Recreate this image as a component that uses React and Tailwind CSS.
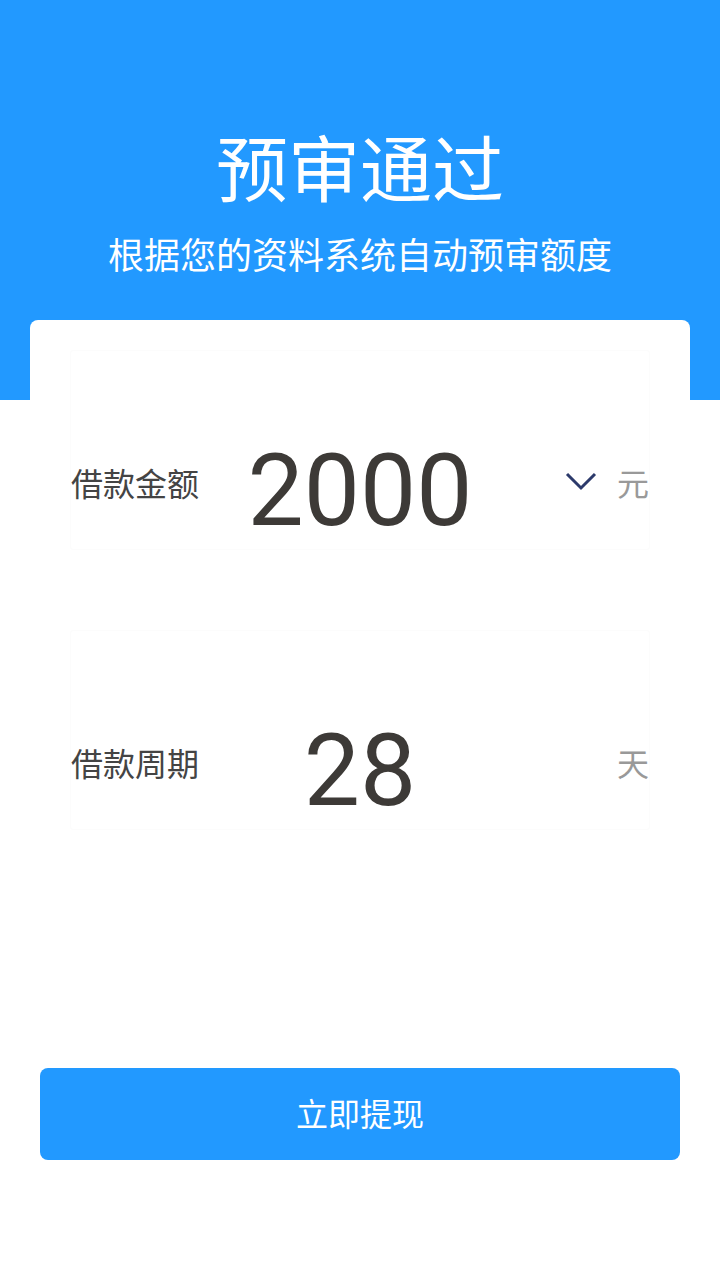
import React from 'react';

const font = { fontFamily: '"Noto Sans CJK SC", "Noto Sans", sans-serif' };

const Row = ({ label, value, unit, dropdown }) => (
  <div className="h-[200px] rounded-[3px] border border-[#fcfcfc] pt-[85px]">
    <div className="grid h-[100px] grid-cols-[1fr_auto_1fr] items-center">
      <div className="-translate-y-[4px] text-[32px] leading-none text-[#444444]">{label}</div>
      <div className="translate-y-[5px] font-['Roboto'] text-[100px] leading-none text-[#3d3a37]">{value}</div>
      <div className="flex -translate-y-[4px] items-center justify-end">
        {dropdown && (
          <svg width="32" height="20" viewBox="0 0 32 20" className="mb-[2px] mr-[20px]">
            <path d="M2 3 L16 17 L30 3" fill="none" stroke="#2c3a6b" strokeWidth="3" />
          </svg>
        )}
        <span className="text-[32px] leading-none text-[#999999]">{unit}</span>
      </div>
    </div>
  </div>
);

const App = () => {
  return (
    <div className="min-h-[1280px] bg-white" style={font}>
      <div className="flex h-[400px] flex-col items-center bg-[#2299ff] pt-[123px] text-white">
        <h1 className="text-[72px] leading-[84px]">预审通过</h1>
        <p className="mt-[22px] text-[36px] leading-[48px]">根据您的资料系统自动预审额度</p>
      </div>
      <div className="mx-[30px] -mt-[80px] rounded-t-lg bg-white px-[40px] pt-[30px]">
        <Row label="借款金额" value="2000" unit="元" dropdown />
        <div className="mt-[80px]">
          <Row label="借款周期" value="28" unit="天" />
        </div>
      </div>
      <div className="mx-[40px] mt-[238px]">
        <button className="flex h-[92px] w-full items-center justify-center rounded-lg bg-[#2299ff] pb-[4px] text-[32px] text-white">
          立即提现
        </button>
      </div>
    </div>
  );
};

export default App;
